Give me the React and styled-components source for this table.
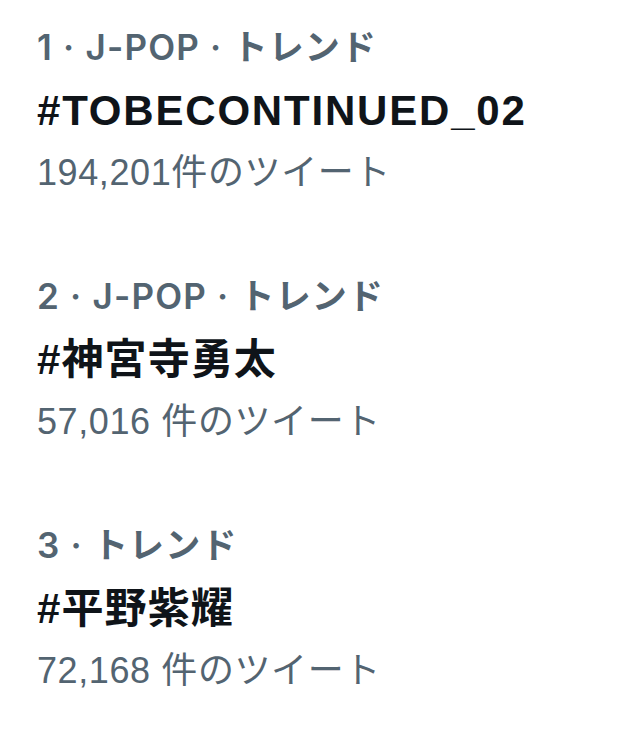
import React from 'react';
import styled, { createGlobalStyle } from 'styled-components';

const GlobalStyle = createGlobalStyle`
  html, body {
    margin: 0;
    padding: 0;
    background: #ffffff;
  }
`;

const trends = [
  { rank: 1, category: 'J-POP · トレンド', name: '#TOBECONTINUED_02', latin: true, count: '194,201件のツイート' },
  { rank: 2, category: 'J-POP · トレンド', name: '#神宮寺勇太', count: '57,016 件のツイート' },
  { rank: 3, category: 'トレンド', name: '#平野紫耀', count: '72,168 件のツイート' },
];

const List = styled.div`
  display: flex;
  flex-direction: column;
  gap: 61px;
  padding: 16px 0 0 37px;
  font-family: "Liberation Sans", "Noto Sans CJK JP", sans-serif;
`;

const Item = styled.div`
  display: flex;
  flex-direction: column;
`;

const Meta = styled.div`
  font-family: Inter, "Noto Sans CJK JP", sans-serif;
  font-size: 35px;
  line-height: 62px;
  font-weight: 600;
  letter-spacing: 1.2px;
  color: #536471;
  white-space: nowrap;
`;

const Name = styled.div`
  font-size: 42px;
  line-height: 62px;
  font-weight: 700;
  letter-spacing: ${(p) => (p.latin ? '1.8px' : '1.1px')};
  color: #0f1419;
  white-space: nowrap;
  padding-top: 2px;
`;

const Count = styled.div`
  font-size: 36px;
  line-height: 62px;
  letter-spacing: 0.6px;
  color: #536471;
  white-space: nowrap;
`;

export default function App() {
  return (
    <>
      <GlobalStyle />
      <List>
        {trends.map((t) => (
          <Item key={t.rank}>
            <Meta>{t.rank} · {t.category}</Meta>
            <Name latin={t.latin}>{t.name}</Name>
            <Count>{t.count}</Count>
          </Item>
        ))}
      </List>
    </>
  );
}
